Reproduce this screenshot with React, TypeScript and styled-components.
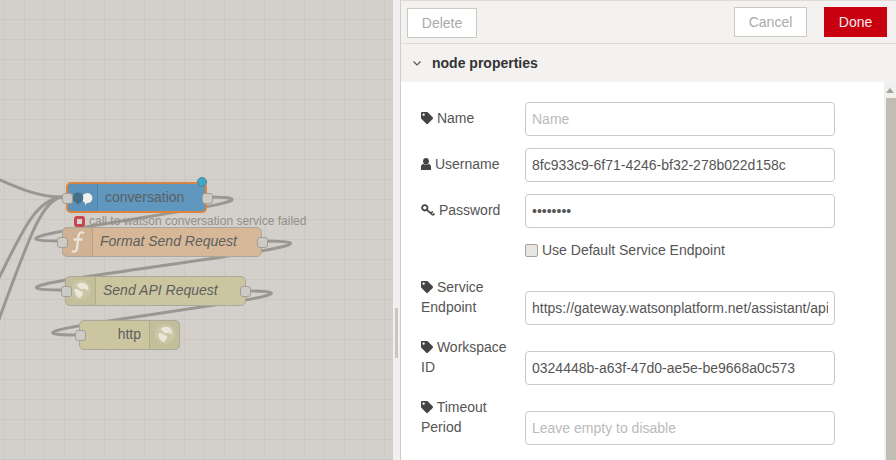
import React from "react";
import styled, { createGlobalStyle } from "styled-components";
import { FaTag } from "react-icons/fa";

const GlobalStyle = createGlobalStyle`
  html, body {
    margin: 0;
    padding: 0;
    background: #fff;
  }
  body {
    font-family: "Liberation Sans", Arial, sans-serif;
    font-size: 14px;
    color: #555;
  }
`;

const Globe: React.FC = () => (
  <svg width="22" height="22" viewBox="0 0 22 22">
    <circle cx="11" cy="10" r="10" fill="#e4e1cf" opacity="0.22" />
    <path
      d="M7 4.500c2.500-2.500 7-2.500 9.500 0 1.500 1.500 2 4 1.500 6-1-.2-1.500-1-2.500-1.500-1.500-.5-3 .5-4.500 0C9 8.500 9.500 7.500 8.500 7 7.500 6.500 6.500 5.500 7 4.500zM4.500 9.500c1.500-1 4 0 5 1 1.200 1 3 .8 3.500 2 .5 1.500-.5 2.500-1.500 3.500-.5 1-1 2-2 2-2-.8-3.500-2.300-4.300-4.500-.5-1.500-1-3-.7-4z"
      fill="#e9e7da"
    />
  </svg>
);

const Bubbles: React.FC = () => (
  <svg width="22" height="18" viewBox="0 0 22 18">
    <path d="M14.500 4.200a5 5 0 1 1 .5 9.900l-2.200 2.400.4-2.700a5 5 0 0 1 1.300-9.600z" fill="#f0f0ec" />
    <path d="M6 3.500a5.300 5.300 0 0 1 1 10.500L6 16l-1-2A5.300 5.300 0 0 1 6 3.500z" fill="#456f88" />
  </svg>
);

const FuncIcon: React.FC = () => (
  <svg width="16" height="24" viewBox="0 0 16 24">
    <path
      d="M14 3.200C11.500 1.500 9 2.500 8.500 5.500L7 18.500C6.600 21.500 4.500 22.500 2 21M3.500 9.500h9"
      fill="none"
      stroke="#ebe3d6"
      strokeWidth="2.300"
    />
  </svg>
);

const UserIcon: React.FC = () => (
  <svg width="10" height="12" viewBox="0 0 10 12">
    <ellipse cx="5" cy="3.200" rx="2.900" ry="3.200" fill="#444" />
    <path d="M0 12V8.800C0 7.300 1 6 2.400 6c.7.800 4.500.8 5.200 0C9 6 10 7.300 10 8.800V12z" fill="#444" />
  </svg>
);

const KeyIcon: React.FC = () => (
  <svg width="14" height="12" viewBox="0 0 14 12">
    <circle cx="3.800" cy="3.800" r="2.700" fill="none" stroke="#444" strokeWidth="1.800" />
    <path d="M5.800 5.800L12 11M10 9.300l1.800-1.800M12 11l1.500-1.500" fill="none" stroke="#444" strokeWidth="1.700" />
  </svg>
);

const Chevron: React.FC = () => (
  <svg width="10" height="10" viewBox="0 0 10 10">
    <path d="M1.500 3.500L5 7l3.500-3.500" fill="none" stroke="#555" strokeWidth="1.200" />
  </svg>
);

const wires = [
  "M62 197 C 42 197, 24 191, -4 178",
  "M62 197 C 35 200, 22 232, -2 280",
  "M62 197 C 42 200, 30 235, -2 322",
  "M206 197 C 336 197, -68 241, 62 241",
  "M262 241 C 412 241, -85 290, 65 290",
  "M245 291 C 380 291, -56 335, 79 335",
];

type NodeData = {
  label: string;
  x: number;
  y: number;
  w: number;
  h: number;
  color: string;
  italic?: boolean;
  selected?: boolean;
  iconRight?: boolean;
  icon: React.ReactNode;
  input: number;
  output?: number;
};

const nodes: NodeData[] = [
  {
    label: "conversation",
    x: 66,
    y: 182,
    w: 141,
    h: 31,
    color: "#5f97bf",
    selected: true,
    icon: <Bubbles />,
    input: -6,
    output: 134,
  },
  {
    label: "Format Send Request",
    x: 62,
    y: 227,
    w: 200,
    h: 30,
    color: "#d6b898",
    italic: true,
    icon: <FuncIcon />,
    input: -6,
    output: 194,
  },
  {
    label: "Send API Request",
    x: 65,
    y: 276,
    w: 181,
    h: 30,
    color: "#cbc6a0",
    italic: true,
    icon: <Globe />,
    input: -5,
    output: 174,
  },
  {
    label: "http",
    x: 79,
    y: 320,
    w: 101,
    h: 30,
    color: "#cbc6a0",
    iconRight: true,
    icon: <Globe />,
    input: -5,
  },
];

const App: React.FC = () => {
  return (
    <Page>
      <GlobalStyle />
      <Canvas>
        <WireLayer width="393" height="460" viewBox="0 0 393 460">
          {wires.map((d) => (
            <path key={d} d={d} fill="none" stroke="#9a9790" strokeWidth="3" />
          ))}
        </WireLayer>
        {nodes.map((n) => (
          <FlowNode
            key={n.label}
            $x={n.x}
            $y={n.y}
            $w={n.w}
            $h={n.h}
            $color={n.color}
            $selected={n.selected}
            $reverse={n.iconRight}
          >
            <IconCell $right={n.iconRight}>{n.icon}</IconCell>
            <NodeLabel $italic={n.italic} $right={n.iconRight}>
              {n.label}
            </NodeLabel>
            <Port $left={n.input} />
            {n.output !== undefined && <Port $left={n.output} />}
          </FlowNode>
        ))}
        <ChangedDot />
        <Status>
          <StatusMark />
          <span>call to watson conversation service failed</span>
        </Status>
      </Canvas>
      <Divider>
        <Grip />
      </Divider>
      <Panel>
        <Toolbar>
          <Button>Delete</Button>
          <ToolbarRight>
            <Button $wide>Cancel</Button>
            <DoneButton>Done</DoneButton>
          </ToolbarRight>
        </Toolbar>
        <SectionHeader>
          <Chevron />
          <SectionTitle>node properties</SectionTitle>
        </SectionHeader>
        <Content>
          <Form>
            <Row>
              <Label>
                <FaTag size={12} /> Name
              </Label>
              <TextInput placeholder="Name" />
            </Row>
            <Row>
              <Label>
                <UserIcon /> Username
              </Label>
              <TextInput defaultValue="8fc933c9-6f71-4246-bf32-278b022d158c" />
            </Row>
            <Row>
              <Label>
                <KeyIcon /> Password
              </Label>
              <TextInput type="password" defaultValue="12345678" />
            </Row>
            <CheckRow>
              <Check type="checkbox" />
              <span>Use Default Service Endpoint</span>
            </CheckRow>
            <TallRow>
              <TallLabel>
                <FaTag size={12} /> Service Endpoint
              </TallLabel>
              <TextInput defaultValue="https://gateway.watsonplatform.net/assistant/api" />
            </TallRow>
            <TallRow>
              <TallLabel>
                <FaTag size={12} /> Workspace ID
              </TallLabel>
              <TextInput defaultValue="0324448b-a63f-47d0-ae5e-be9668a0c573" />
            </TallRow>
            <TallRow>
              <TallLabel>
                <FaTag size={12} /> Timeout Period
              </TallLabel>
              <TextInput placeholder="Leave empty to disable" />
            </TallRow>
          </Form>
          <ScrollBar>
            <ScrollArrow />
            <ScrollThumb />
          </ScrollBar>
        </Content>
      </Panel>
    </Page>
  );
};

export default App;

const Page = styled.div`
  width: 896px;
  height: 460px;
  display: flex;
  overflow: hidden;
`;

const Canvas = styled.div`
  position: relative;
  width: 393px;
  flex: none;
  overflow: hidden;
  background-color: #d3d0cb;
  background-image: linear-gradient(#cbc8c3 1px, transparent 1px),
    linear-gradient(90deg, #cbc8c3 1px, transparent 1px);
  background-size: 20px 20px;
  background-position: 4px 19px;
`;

const WireLayer = styled.svg`
  position: absolute;
  left: 0;
  top: 0;
`;

const FlowNode = styled.div<{
  $x: number;
  $y: number;
  $w: number;
  $h: number;
  $color: string;
  $selected?: boolean;
  $reverse?: boolean;
}>`
  position: absolute;
  left: ${(p) => p.$x}px;
  top: ${(p) => p.$y}px;
  width: ${(p) => p.$w}px;
  height: ${(p) => p.$h}px;
  box-sizing: border-box;
  display: flex;
  flex-direction: ${(p) => (p.$reverse ? "row-reverse" : "row")};
  background: ${(p) => p.$color};
  border: ${(p) => (p.$selected ? "2px solid #d9843f" : "1px solid #aaa89b")};
  border-radius: 5px;
`;

const IconCell = styled.div<{ $right?: boolean }>`
  width: 29px;
  flex: none;
  display: flex;
  align-items: center;
  justify-content: center;
  background: rgba(0, 0, 0, 0.03);
  border-left: ${(p) => (p.$right ? "1px solid rgba(0,0,0,.1)" : "none")};
  border-right: ${(p) => (p.$right ? "none" : "1px solid rgba(0,0,0,.1)")};
`;

const NodeLabel = styled.div<{ $italic?: boolean; $right?: boolean }>`
  flex: 1;
  text-align: ${(p) => (p.$right ? "right" : "left")};
  padding: ${(p) => (p.$right ? "0 8px 0 0" : "0 0 0 7px")};
  font-size: 14px;
  font-style: ${(p) => (p.$italic ? "italic" : "normal")};
  line-height: 27px;
  color: #5d5f60;
  white-space: nowrap;
`;

const Port = styled.div<{ $left: number }>`
  position: absolute;
  left: ${(p) => p.$left}px;
  top: 9px;
  width: 9px;
  height: 9px;
  background: #cdcbc5;
  border: 1px solid #a09e97;
  border-radius: 3px;
`;

const ChangedDot = styled.div`
  position: absolute;
  left: 197px;
  top: 177px;
  width: 8px;
  height: 8px;
  background: #3da7c8;
  border: 1px solid #5d7f8d;
  border-radius: 50%;
`;

const Status = styled.div`
  position: absolute;
  left: 74px;
  top: 214px;
  display: flex;
  align-items: center;
  gap: 4px;
  font-size: 12px;
  line-height: 14px;
  color: #918f8a;
  white-space: nowrap;
`;

const StatusMark = styled.div`
  width: 5px;
  height: 5px;
  border: 3px solid #c8484f;
  background: #d8d5d0;
  border-radius: 3px;
`;

const Divider = styled.div`
  width: 7px;
  flex: none;
  display: flex;
  align-items: center;
  justify-content: center;
  background: #f1f0ef;
  padding-top: 206px;
  box-sizing: border-box;
`;

const Grip = styled.div`
  width: 3px;
  height: 50px;
  background: #c9c7c1;
`;

const Panel = styled.div`
  flex: 1;
  min-width: 0;
  display: flex;
  flex-direction: column;
  box-sizing: border-box;
  border-left: 1px solid #cfcdc8;
  border-top: 1px solid #dddbd8;
  background: #f3f2f1;
`;

const Toolbar = styled.div`
  height: 43px;
  flex: none;
  box-sizing: border-box;
  display: flex;
  align-items: flex-start;
  justify-content: space-between;
  padding: 6px 9px 0 6px;
  border-bottom: 1px solid #dddbd8;
`;

const ToolbarRight = styled.div`
  display: flex;
  gap: 17px;
`;

const Button = styled.button<{ $wide?: boolean }>`
  width: ${(p) => (p.$wide ? "73px" : "70px")};
  height: 30px;
  box-sizing: border-box;
  background: #fff;
  border: 1px solid #ccc9c3;
  font-family: inherit;
  font-size: 14px;
  color: #aaa;
  margin-top: ${(p) => (p.$wide ? "0" : "1px")};
  padding: 0;
`;

const DoneButton = styled.button`
  width: 63px;
  height: 30px;
  background: #c8000f;
  border: none;
  font-family: inherit;
  font-size: 14px;
  color: #f1eeee;
  padding: 0;
`;

const SectionHeader = styled.div`
  height: 38px;
  flex: none;
  display: flex;
  align-items: center;
  gap: 10px;
  padding-left: 11px;
`;

const SectionTitle = styled.div`
  font-size: 14px;
  font-weight: bold;
  color: #333;
`;

const Content = styled.div`
  flex: 1;
  min-height: 0;
  display: flex;
  background: #fff;
  overflow: hidden;
`;

const Form = styled.div`
  flex: 1;
  min-width: 0;
  padding: 20px 0 0 20px;
  display: flex;
  flex-direction: column;
`;

const Row = styled.div`
  display: flex;
  align-items: center;
  height: 34px;
  margin-bottom: 12px;
  flex: none;
`;

const TallRow = styled.div`
  display: flex;
  align-items: flex-end;
  height: 47px;
  margin-bottom: 13px;
  flex: none;
`;

const CheckRow = styled.div`
  display: flex;
  align-items: center;
  gap: 4px;
  height: 20px;
  margin: 0 0 18px 104px;
  color: #555;
  flex: none;
`;

const Label = styled.label`
  width: 104px;
  flex: none;
  line-height: 20px;
  margin-top: -2px;
  color: #555;

  svg {
    color: #444;
    vertical-align: -1px;
  }
`;

const TallLabel = styled(Label)`
  width: 94px;
  margin: 0 10px 8px 0;
`;

const TextInput = styled.input`
  width: 310px;
  height: 34px;
  flex: none;
  box-sizing: border-box;
  padding: 0 6px;
  background: #fff;
  border: 1px solid #ccc9c3;
  border-radius: 4px;
  font-family: inherit;
  font-size: 14px;
  color: #555;
  outline: none;

  &::placeholder {
    color: #bbb;
    opacity: 1;
  }
`;

const Check = styled.input`
  appearance: none;
  width: 13px;
  height: 13px;
  margin: 0;
  box-sizing: border-box;
  background: #e8e6e3;
  border: 1px solid #a5a3a0;
  border-radius: 2px;
`;

const ScrollBar = styled.div`
  width: 12px;
  flex: none;
  display: flex;
  flex-direction: column;
  align-items: flex-end;
  background: #f1f0ef;
`;

const ScrollArrow = styled.div`
  width: 0;
  height: 0;
  margin: 6px 2px 5px 0;
  border-left: 4px solid transparent;
  border-right: 4px solid transparent;
  border-bottom: 5px solid #a5a39d;
`;

const ScrollThumb = styled.div`
  width: 10px;
  flex: 1;
  background: #c1bdb5;
`;
